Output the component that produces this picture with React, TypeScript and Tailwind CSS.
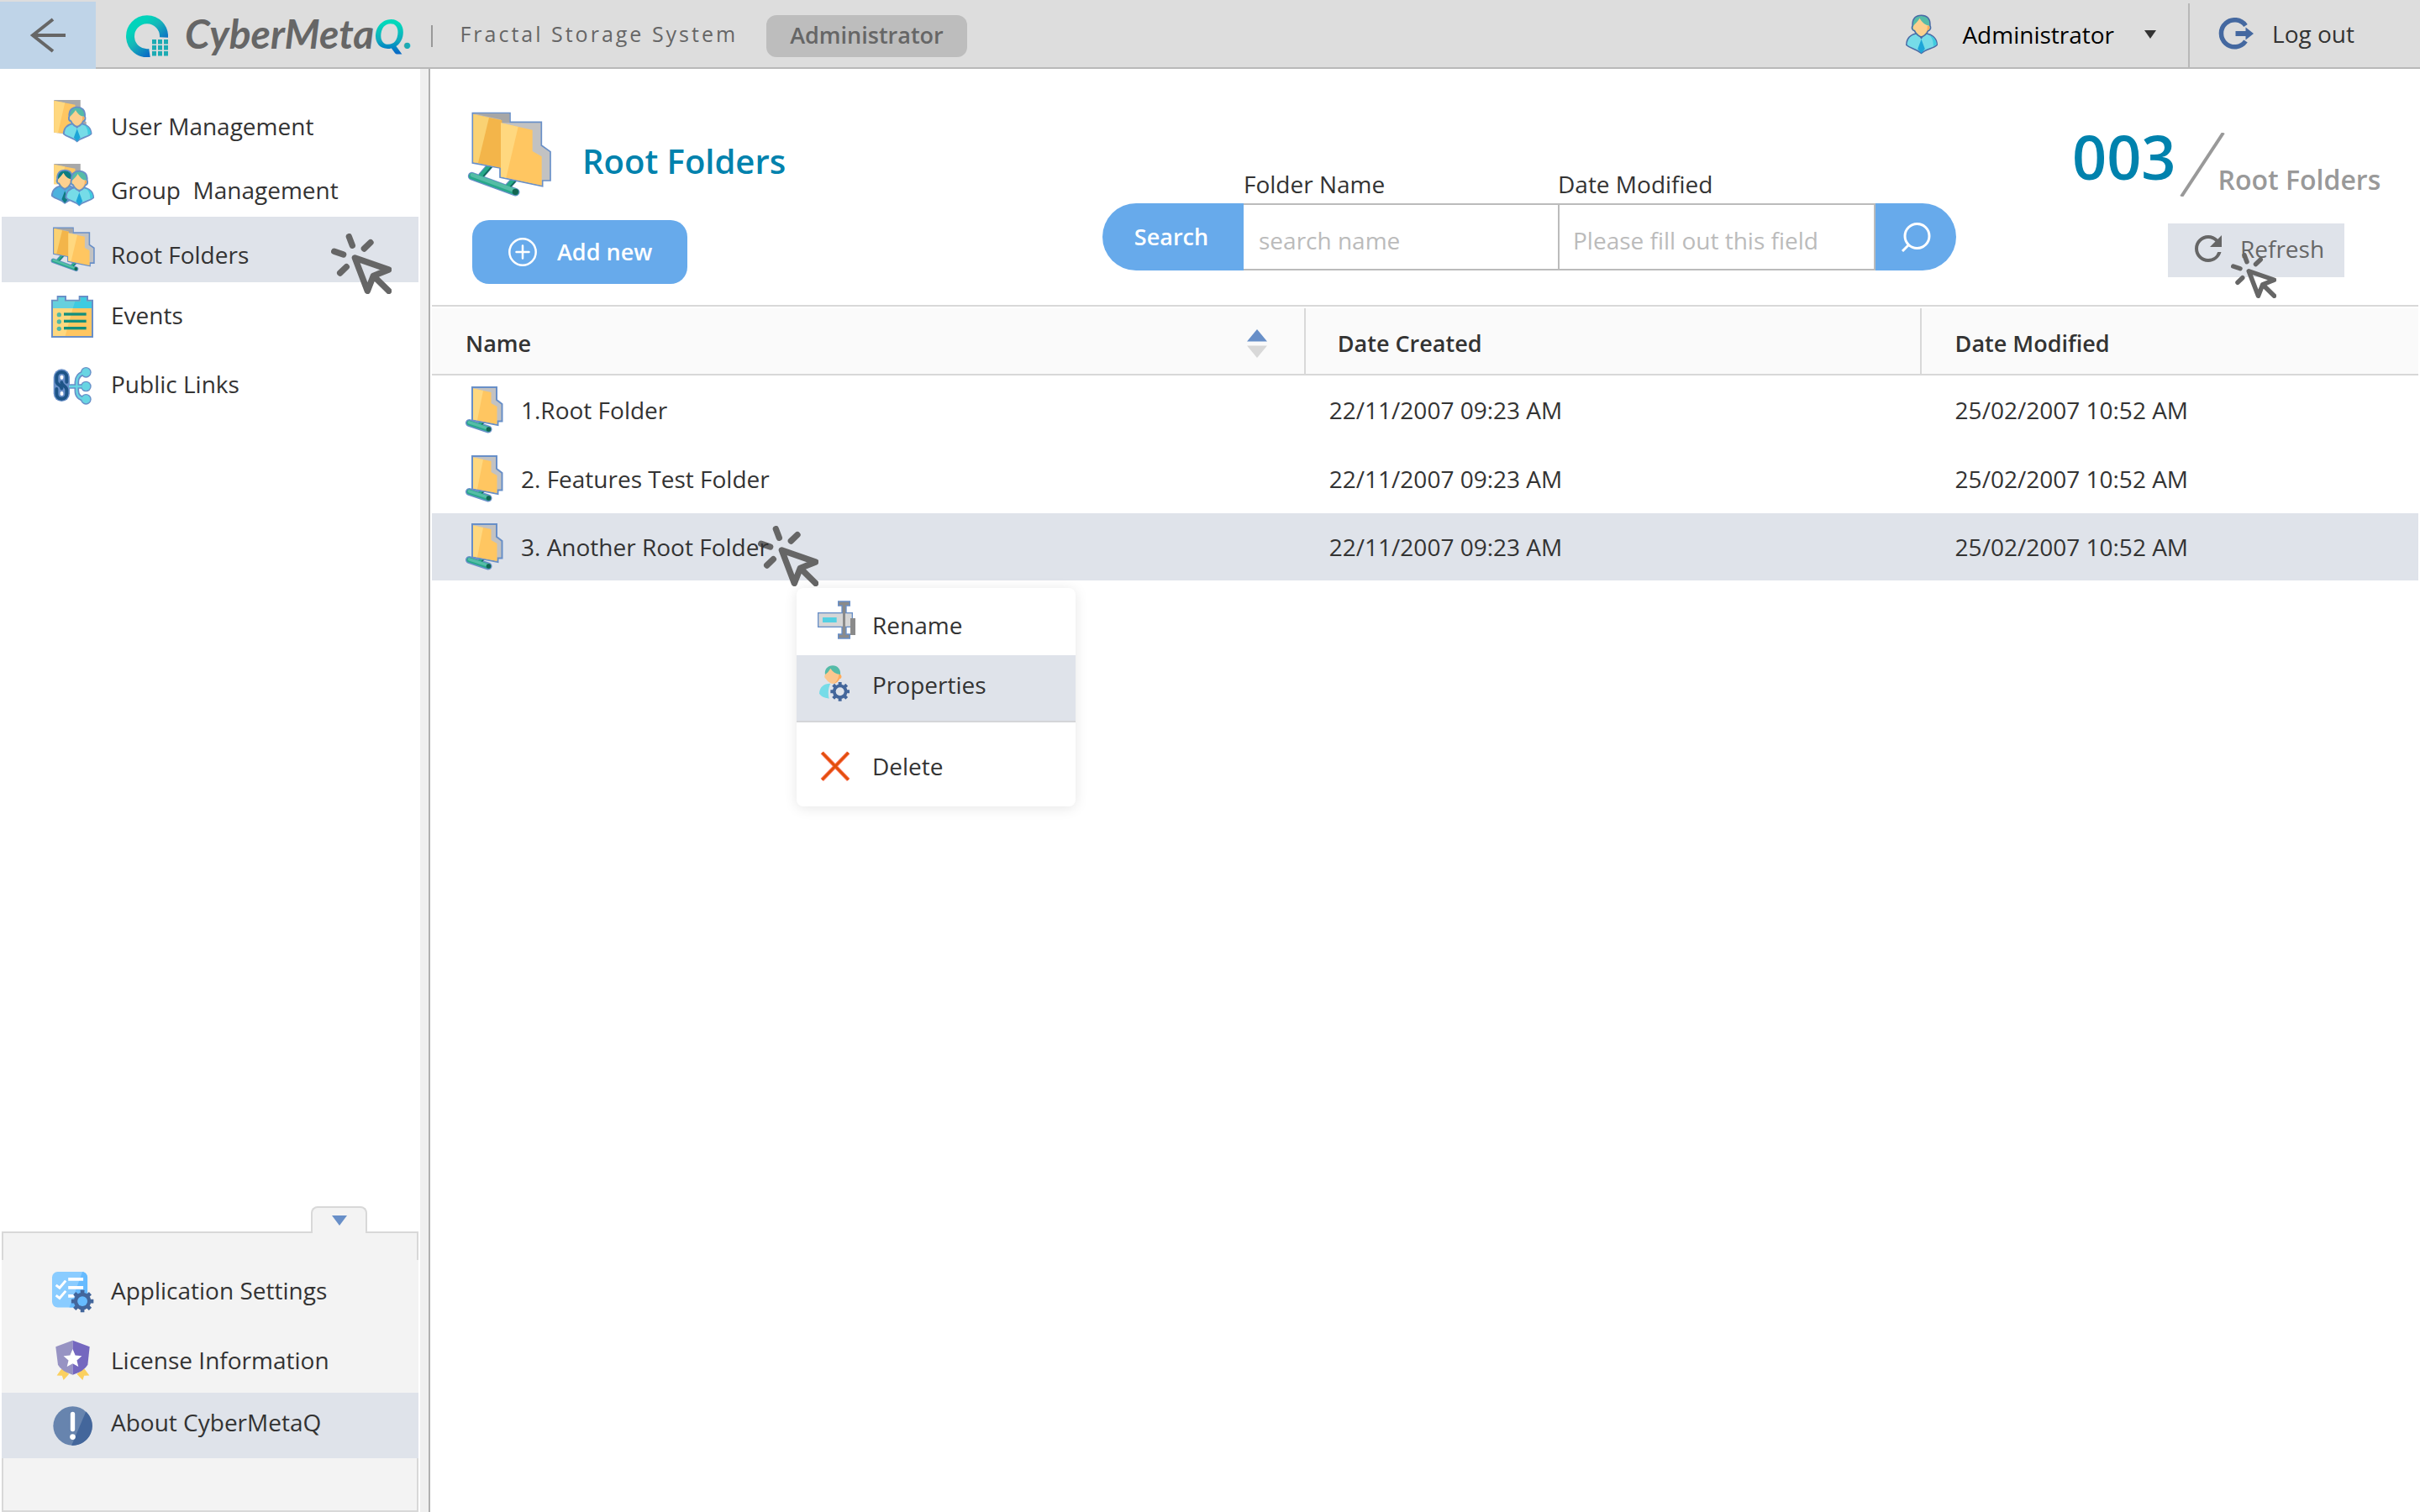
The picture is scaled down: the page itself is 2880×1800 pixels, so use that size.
import React from "react";
import type { ReactNode } from "react";
import { MdRefresh } from "react-icons/md";

const BLUE = "#688fc8";

function LogoMark() {
  return (
    <svg viewBox="0 0 50 50" className="size-[50px] shrink-0" aria-hidden="true">
      <defs>
        <linearGradient id="ring" gradientUnits="userSpaceOnUse" x1="8" y1="5" x2="42" y2="45">
          <stop offset="0.2" stopColor="#02d3bb" />
          <stop offset="0.45" stopColor="#17b5b8" />
          <stop offset="0.85" stopColor="#0a6cc6" />
        </linearGradient>
      </defs>
      <path d="M45 26.500A20 20 0 1 0 28 45" fill="none" stroke="url(#ring)" strokeWidth="10" />
      {[31, 38, 45].map((x) =>
        [29, 36, 43].map((y) => (
          <rect key={`${x}-${y}`} x={x} y={y} width="5" height="5.500" fill="#1cabb3" />
        )),
      )}
    </svg>
  );
}

function PersonShape({ back = false, line = 1.6 }: { back?: boolean; line?: number }) {
  const body = back ? "#4db2de" : "#76dce8";
  const side = back ? "#4db2de" : "#3fcbe0";
  const hair = back ? "#0d7d80" : "#55bba8";
  const tie = back ? "#0e7a80" : "#1da5d8";
  const edge = line > 1.6 ? BLUE : "#4a6ba6";
  return (
    <>
      <path
        d="M15 23.500C6 25 1.200 30 1 38C6 43 13 42.500 19.500 48.500C26 42.500 34 43 39 38C38.800 30 33 25 24 23.500Z"
        fill={body}
        stroke={edge}
        strokeWidth={line}
        strokeLinejoin="round"
      />
      <path d="M29 25.500C35 28 38.300 32 38.500 37.500L34.500 39.500C34.500 33 33 29 29 25.500Z" fill={side} />
      <path d="M19.500 31L24 43L19.500 48.500L15 43Z" fill={tie} />
      <path d="M14.500 24H24.500L19.500 31Z" fill={edge} />
      <path
        d="M8.700 14C8 5 13 1.200 19.500 1.200C26 1.200 31 5 30.300 14C32 17 30.500 20 28 20.500C26 24.500 22.500 27.500 19.500 28C16.500 27.500 13 24.500 11 20.500C8.500 20 7 17 8.700 14Z"
        fill={hair}
        stroke={edge}
        strokeWidth={line}
      />
      <path
        d="M17.500 5C15 9 12 12 9.800 14.200C8.500 17 9.500 19.300 11.800 19.500C13.500 23.500 17 26.500 19.500 27C22 26.500 25.500 23.500 27.200 19.500C29.500 19.300 30.500 17 29.200 14.200C23.500 13.500 20 9.500 17.500 5Z"
        fill="#fcd08f"
      />
      <path d="M27 14.500C27.500 19 25.500 24 21 26.600C24 25.500 26 22.500 27.200 19.500C29.500 19.300 30.500 17 29.200 14.200Z" fill="#ffab5c" />
    </>
  );
}

function UserIcon() {
  return (
    <svg viewBox="0 0 40 50" className="h-12 w-10 shrink-0" aria-hidden="true">
      <PersonShape />
    </svg>
  );
}

function UserManagementIcon() {
  return (
    <svg viewBox="178 84 158 160" className="h-[53px] w-[53px]" aria-hidden="true">
      <path d="M190 87H285V150L306 166V210H240L190 204Z" fill="#a8a8a8" />
      <path d="M190 90L266 104V212L190 203Z" fill="#ffc661" />
      <path d="M190 90L229 97L204 206L190 203Z" fill="#ffd87f" />
      <g transform="translate(222 110) scale(2.6)">
        <PersonShape line={2.2} />
      </g>
    </svg>
  );
}

function GroupManagementIcon() {
  return (
    <svg viewBox="178 84 158 160" className="h-[53px] w-[53px]" aria-hidden="true">
      <path d="M190 87H285V130H190Z" fill="#a8a8a8" />
      <path d="M190 90L266 104V160H190Z" fill="#ffc661" />
      <path d="M190 90L229 97L214 160H190Z" fill="#ffd87f" />
      <g transform="translate(180 107) scale(2.5)">
        <PersonShape back line={2.2} />
      </g>
      <g transform="translate(230 110) scale(2.6)">
        <PersonShape line={2.2} />
      </g>
    </svg>
  );
}

function RootFoldersIcon({ large = false }: { large?: boolean }) {
  const w = large ? 5 : 9;
  return (
    <svg
      viewBox="166 94 306 312"
      className={large ? "h-[104px] w-[102px] shrink-0" : "h-[54px] w-[53px]"}
      aria-hidden="true"
    >
      <g strokeLinecap="round">
        <path d="M250 290L220 324M336 340L316 362" stroke={BLUE} strokeWidth={18 + w} />
        <path d="M186 327L342 384" stroke={BLUE} strokeWidth={24 + w} />
        <path d="M250 290L220 324M336 340L316 362" stroke="#27a98b" strokeWidth="17" />
        <path d="M256 294L228 326M342 344L324 364" stroke="#126a58" strokeWidth="5" />
        <path d="M186 327L342 384" stroke="#27a98b" strokeWidth="22" />
        <path d="M187 323L340 379" stroke="#55bda6" strokeWidth="14" />
      </g>
      <circle cx="341" cy="383" r="11" fill="#126652" />
      <path
        d="M188 102H322V134H434V217L466 240V343H438V363L286 331V298L188 280Z"
        fill="#c2c2c2"
        stroke={BLUE}
        strokeWidth={w}
      />
      <path d="M191 104H320V137H289V125Z" fill="#a6a6a6" />
      <path d="M191 106L293 127V298L191 277Z" fill="#f3b54a" />
      <path d="M191 106L247 118L208 280L191 277Z" fill="#fad273" />
      <path d="M289 137L402 162V238L435 257V360L289 329Z" fill="#ffc661" />
      <path d="M289 137L351 151L308 333L289 329Z" fill="#ffd87f" />
    </svg>
  );
}

function EventsIcon() {
  return (
    <svg viewBox="180 786 156 156" className="size-[52px]" aria-hidden="true">
      <path
        d="M186 806H206V792H234V806H284V792H312V806H330V936H186Z"
        fill="#ffc661"
        stroke={BLUE}
        strokeWidth="6"
      />
      <path d="M189 809H209V795H231V809H287V795H309V809H327V834H189Z" fill="#3fcbe0" />
      <path d="M189 809H209V795H231V809H268L260 834H189Z" fill="#66d0de" />
      <path d="M189 834H260L233 933H189Z" fill="#ffd87f" />
      {[857, 882, 907].map((y) => (
        <g key={y}>
          <circle cx="211" cy={y} r="8" fill="#50b8a5" />
          <path d={`M228 ${y - 2}H308`} stroke="#138f7c" strokeWidth="10" />
        </g>
      ))}
    </svg>
  );
}

function PublicLinksIcon() {
  return (
    <svg viewBox="182 1032 148 150" className="size-[50px]" fill="none" aria-hidden="true">
      <rect x="189" y="1048" width="58" height="116" rx="29" fill={BLUE} />
      <g strokeLinecap="round">
        <path d="M250 1110H290M304 1060C280 1064 272 1080 272 1095V1125C272 1142 280 1154 304 1156" stroke={BLUE} strokeWidth="17" />
      </g>
      {[1060, 1110, 1156].map((y) => (
        <circle key={y} cx="305" cy={y} r="19" fill={BLUE} />
      ))}
      <path d="M244 1110H290M304 1060C280 1064 272 1080 272 1095V1125C272 1142 280 1154 304 1156" stroke="#68d5e3" strokeWidth="7" />
      {[1060, 1110, 1156].map((y) => (
        <circle key={y} cx="305" cy={y} r="15" fill="#68d5e3" />
      ))}
      <path
        d="M236 1094V1077C236 1053 200 1053 200 1077V1092C200 1106 218 1104 218 1117"
        stroke="#1d5487"
        strokeWidth="12"
        strokeLinecap="round"
      />
      <path
        d="M200 1119V1136C200 1160 236 1160 236 1136V1122C236 1108 218 1108 218 1096"
        stroke="#1d5487"
        strokeWidth="12"
        strokeLinecap="round"
      />
      <rect x="213" y="1070" width="11" height="15" rx="5" fill="#fff" />
      <rect x="213" y="1128" width="11" height="15" rx="5" fill="#fff" />
    </svg>
  );
}

function Gear({ cx, cy, r, hole, holeFill }: { cx: number; cy: number; r: number; hole: number; holeFill: string }) {
  return (
    <g transform={`translate(${cx} ${cy}) scale(${r / 40})`}>
      {[0, 45, 90, 135].map((a) => (
        <rect key={a} x="-7" y="-40" width="14" height="80" rx="1" fill="#43669b" transform={`rotate(${a})`} />
      ))}
      <circle r="31" fill="#43669b" />
      <circle r={(hole * 40) / r} fill={holeFill} />
    </g>
  );
}

function AppSettingsIcon() {
  return (
    <svg viewBox="62 36 154 154" className="size-[51px]" fill="none" aria-hidden="true">
      <rect x="65" y="39" width="127" height="128" rx="20" fill="#8accff" />
      <path d="M174 39C186 41 192 50 192 59V147C192 158 184 167 172 167H127Z" fill="#66bbff" />
      <path d="M79 87L92 97L114 71M79 124L92 134L114 108" stroke="#fff" strokeWidth="9" />
      <path d="M123 66H177M123 96H177M123 126H145" stroke="#fff" strokeWidth="11" />
      <Gear cx={174} cy={145} r={40} hole={18} holeFill="#66bbff" />
    </svg>
  );
}

function LicenseIcon() {
  return (
    <svg viewBox="62 282 154 154" className="size-[51px]" aria-hidden="true">
      <path d="M100 388L126 408L106 430L101 414L82 413ZM180 388L154 408L175 430L180 414L199 413Z" fill="#fbd05f" />
      <path d="M139 287L78 310L86 375Q98 398 139 411Z" fill="#9793c3" />
      <path d="M139 287L200 310L193 375Q180 398 139 411Z" fill="#7467bf" />
      <path d="M139 318L148.500 341L172 343L154 359L159.500 382L139 370L118.500 382L124 359L106 343L129.500 341Z" fill="#fff" />
    </svg>
  );
}

function AboutIcon() {
  return (
    <svg viewBox="62 512 152 152" className="size-[51px]" aria-hidden="true">
      <circle cx="138" cy="588" r="69" fill="#6784ae" />
      <path d="M185 537A69 69 0 0 1 134 657Z" fill="#43669b" />
      <path d="M138 546V600" stroke="#fff" strokeWidth="16" strokeLinecap="round" />
      <circle cx="138" cy="627" r="10" fill="#fff" />
    </svg>
  );
}

function RowFolderIcon() {
  return (
    <svg viewBox="0 0 46 56" className="h-14 w-[46px] shrink-0" fill="none" aria-hidden="true">
      <path d="M22 39L16 46" stroke={BLUE} strokeWidth="7" />
      <path d="M4.500 43.500L27 51" stroke={BLUE} strokeWidth="9" strokeLinecap="round" />
      <path d="M22 39L16 46" stroke="#27a98b" strokeWidth="4" />
      <path d="M23 41L19 46" stroke="#126a58" strokeWidth="1.500" />
      <path d="M4.500 43.500L27 51" stroke="#27a98b" strokeWidth="6" strokeLinecap="round" />
      <path d="M4.500 42.800L26 49.800" stroke="#55bda6" strokeWidth="3.500" strokeLinecap="round" />
      <circle cx="27.500" cy="51" r="2.800" fill="#126652" />
      <path d="M8 1H37V16L43.500 21V41.500H38.500V46L8 40Z" fill="#c2c2c2" stroke={BLUE} strokeWidth="2" />
      <path d="M9 2.500L30.500 7V20L37.500 24V45L9 39.500Z" fill="#ffc661" />
      <path d="M9 2.500L21 5L14 40.500L9 39.500Z" fill="#ffd87f" />
    </svg>
  );
}

function RenameIcon() {
  return (
    <svg viewBox="210 342 144 144" className="size-12" aria-hidden="true">
      <rect x="221" y="389" width="122" height="50" fill="#d6d6d6" stroke={BLUE} strokeWidth="4" />
      <rect x="237" y="405" width="50" height="18" fill="#54d0e2" />
      <path d="M293 348H334V363H321V465H334V480H293V465H306V363H293Z" fill="#8a8a8a" stroke={BLUE} strokeWidth="4" />
      <rect x="303" y="391" width="21" height="46" fill="#d6d6d6" />
      <rect x="309" y="352" width="9" height="124" fill="#8a8a8a" />
      <rect x="336" y="408" width="18" height="60" fill="#8a8a8a" />
    </svg>
  );
}

function PropertiesIcon() {
  return (
    <svg viewBox="210 574 144 144" className="size-12" aria-hidden="true">
      <path d="M225 678C226 655 240 642 265 642C256 660 256 678 260 696C248 693 232 690 225 678Z" fill="#76dce8" />
      <path d="M246 612C242 590 256 578 273 578C290 578 303 592 300 612Z" fill="#55bba8" />
      <path d="M265 588C260 598 252 606 246 610C242 616 243 622 249 626C255 636 266 643 273 643C281 643 292 636 297 626C306 624 306 614 300 610C284 608 272 600 265 588Z" fill="#fcc78f" />
      <path d="M295 611C294 624 288 636 277 643C286 641 292 636 297 626C306 624 306 614 300 610Z" fill="#ffab5c" />
      <Gear cx={299} cy={671} r={34} hole={15} holeFill="#dfe3ea" />
    </svg>
  );
}

function DeleteIcon() {
  return (
    <svg viewBox="210 864 144 144" className="size-12" aria-hidden="true">
      <path d="M235 888L329 985M329 888L235 985" stroke="#ff7058" strokeWidth="14" />
      <path d="M235 888L329 985M329 888L235 985" stroke="#e0500a" strokeWidth="8" />
    </svg>
  );
}

function ClickCursor({ className }: { className: string }) {
  return (
    <svg
      viewBox="1182 564 216 216"
      className={`pointer-events-none absolute ${className}`}
      fill="none"
      stroke="#666"
      strokeWidth="22"
      strokeLinecap="round"
      strokeLinejoin="round"
      aria-hidden="true"
    >
      <path d="M1246 575L1258 607M1323 596L1300 618M1193 628L1226 639M1237 683L1214 705" />
      <path d="M1267 651L1388 693L1333 715L1312 769ZM1337 719L1388 769" />
    </svg>
  );
}

function LogOutIcon() {
  return (
    <svg viewBox="0 0 42 38" className="h-[38px] w-[42px]" aria-hidden="true">
      <path d="M32.500 9.500A16 16 0 1 0 32.500 28" fill="none" stroke="#4468a0" strokeWidth="5.500" />
      <path d="M20.500 16H32.500V11.500L42 19L32.500 26.500V22H20.500Z" fill="#4468a0" />
    </svg>
  );
}

type NavItem = { label: string; icon: ReactNode; row: string; text?: string };

const navItems: NavItem[] = [
  { label: "User Management", icon: <UserManagementIcon />, row: "h-[76px]", text: "pt-3" },
  { label: "Group  Management", icon: <GroupManagementIcon />, row: "h-[76px]", text: "pt-3" },
  { label: "Root Folders", icon: <RootFoldersIcon />, row: "h-[78px] bg-[#dfe3ea]", text: "pt-3" },
  { label: "Events", icon: <EventsIcon />, row: "h-[82px]", text: "pb-1" },
  { label: "Public Links", icon: <PublicLinksIcon />, row: "h-[82px]", text: "pb-1" },
];

const settingsItems: NavItem[] = [
  { label: "Application Settings", icon: <AppSettingsIcon />, row: "h-20 pb-1", text: "pb-1" },
  { label: "License Information", icon: <LicenseIcon />, row: "h-[78px]" },
  { label: "About CyberMetaQ", icon: <AboutIcon />, row: "h-[78px] bg-[#dfe3ea]", text: "pb-2" },
];

function NavLink({ item }: { item: NavItem }) {
  return (
    <a href="#" className={`flex items-center gap-[18px] pl-14 ${item.row}`}>
      <span className="flex w-14 shrink-0 justify-center">{item.icon}</span>
      <span className={`whitespace-pre ${item.text ?? ""}`}>{item.label}</span>
    </a>
  );
}

function Header() {
  return (
    <header className="flex h-[82px] items-stretch border-b-2 border-[#b8b8b8] bg-[#ddd]">
      <button type="button" aria-label="Back" className="mt-0.5 -mb-0.5 flex w-[114px] items-center justify-center bg-[#bfd4e8]">
        <svg viewBox="0 0 44 42" className="h-[42px] w-11" fill="none" stroke="#666" strokeWidth="4" aria-hidden="true">
          <path d="M43 21H4M28 2L4 21L28 40" />
        </svg>
      </button>
      <div className="ml-9 flex items-center pt-1.5">
        <LogoMark />
        <span className="ml-5 pb-1.5 font-['Lato',sans-serif] text-5xl leading-[60px] font-bold text-[#666] italic">
          CyberMeta
          <span className="bg-linear-to-b from-[#02d8bb] from-30% via-[#12a9bd] via-65% to-[#0a6cc6] to-90% bg-clip-text text-transparent">Q</span>
          <span className="text-[#1cabb3]">.</span>
        </span>
        <span className="ml-[22px] h-[26px] w-0.5 bg-[#999]" />
        <span className="ml-8 pb-1.5 text-[25px] tracking-[3px] text-[#666]">Fractal Storage System</span>
        <span className="ml-[34px] flex h-[50px] items-center rounded-xl bg-[#bdbdbd] px-7 pb-0.5 text-[27px] font-semibold text-[#666]">
          Administrator
        </span>
      </div>
      <div className="ml-auto flex items-center">
        <button type="button" className="flex items-center pt-0.5 pr-[38px] text-black">
          <UserIcon />
          <span className="ml-7">Administrator</span>
          <svg viewBox="0 0 14 10" className="ml-9 h-2.5 w-3.5" fill="#333" aria-hidden="true">
            <path d="M0 0H14L7 10Z" />
          </svg>
        </button>
        <span className="mt-1 w-0.5 self-stretch bg-[#b8b8b8]" />
        <button type="button" className="flex items-center gap-[22px] pr-[78px] pl-[34px]">
          <LogOutIcon />
          Log out
        </button>
      </div>
    </header>
  );
}

function Sidebar() {
  return (
    <aside className="flex w-[512px] shrink-0 border-r-2 border-[#b0b0b0]">
      <div className="flex flex-1 flex-col px-0.5">
        <nav className="relative pt-6">
          {navItems.map((item) => (
            <NavLink key={item.label} item={item} />
          ))}
          <ClickCursor className="top-[196px] right-[32px] size-[72px]" />
        </nav>
        <div className="mt-auto">
          <div className="flex justify-end pr-[61px]">
            <button
              type="button"
              aria-label="Collapse settings"
              className="relative z-10 -mb-0.5 flex h-8 w-[67px] items-center justify-center rounded-t-lg border-2 border-b-0 border-[#d8d8d8] bg-[#f3f3f3]"
            >
              <svg viewBox="0 0 18 12" className="h-3 w-[18px]" fill={BLUE} aria-hidden="true">
                <path d="M0 0H18L9 12Z" />
              </svg>
            </button>
          </div>
          <nav className="bg-[#f3f3f3]">
            <div className="h-[34px] border-x-2 border-t-2 border-[#d8d8d8]" />
            {settingsItems.map((item) => (
              <NavLink key={item.label} item={item} />
            ))}
            <div className="h-16 border-x-2 border-b-2 border-[#d8d8d8]" />
          </nav>
        </div>
      </div>
      <div className="w-2.5 bg-[#efefef]" />
    </aside>
  );
}

function SearchBar() {
  return (
    <form className="mr-[138px] ml-auto flex items-end self-end pb-[41px]" onSubmit={(e) => e.preventDefault()}>
      <button type="submit" className="h-20 w-[168px] rounded-l-full bg-[#67aaeb] pr-1 text-[27px] font-semibold text-white">
        Search
      </button>
      <div className="flex w-[374px] flex-col gap-1">
        <label htmlFor="folder-name">Folder Name</label>
        <input
          id="folder-name"
          placeholder="search name"
          className="h-20 border-y-2 border-[#bbb] px-[18px] pt-2 outline-none placeholder:text-[#bbb]"
        />
      </div>
      <div className="flex w-[378px] flex-col gap-1">
        <label htmlFor="date-modified">Date Modified</label>
        <input
          id="date-modified"
          placeholder="Please fill out this field"
          className="h-20 border-2 border-[#bbb] px-4 pt-2 outline-none placeholder:text-[#bbb]"
        />
      </div>
      <button type="submit" aria-label="Run search" className="flex h-20 w-24 items-center justify-center rounded-r-full bg-[#67aaeb]">
        <svg viewBox="0 0 36 36" className="size-9" fill="none" stroke="#fff" strokeWidth="3" aria-hidden="true">
          <circle cx="19.500" cy="17" r="14.500" />
          <path d="M9 28L2 35" />
        </svg>
      </button>
    </form>
  );
}

function Toolbar() {
  return (
    <section className="flex h-[281px] pr-11 pl-[41px]">
      <div className="flex flex-col items-start pt-[50px]">
        <div className="flex items-center gap-9">
          <RootFoldersIcon large />
          <h1 className="pt-4 text-[40px] leading-[54px] font-semibold text-[#0082ad]">Root Folders</h1>
        </div>
        <button
          type="button"
          className="mt-[26px] ml-[7px] flex h-[76px] w-64 items-center rounded-[20px] bg-[#67aaeb] pl-[43px] text-[27px] font-semibold text-white"
        >
          <svg viewBox="0 0 34 34" className="mr-6 size-[34px]" fill="none" stroke="#fff" strokeWidth="2.500" strokeLinecap="round" aria-hidden="true">
            <circle cx="17" cy="17" r="15.700" />
            <path d="M17 9.500V24.500M9.500 17H24.500" />
          </svg>
          Add new
        </button>
      </div>
      <SearchBar />
      <div className="flex w-[368px] flex-col items-end pt-[68px]">
        <div className="flex w-full items-end">
          <span className="mb-3 text-7xl leading-none font-semibold text-[#0082ad]">003</span>
          <svg viewBox="0 0 54 76" className="ml-1 h-[76px] w-[54px]" stroke="#999" strokeWidth="4" aria-hidden="true">
            <path d="M2 76L52 0" />
          </svg>
          <span className="mb-1 -ml-2 text-[32px] leading-8 font-semibold text-[#999]">Root Folders</span>
        </div>
        <div className="relative mt-8 mr-11">
          <button type="button" className="flex h-16 w-[210px] items-center gap-3.5 bg-[#dfe3ea] pb-1 pl-6 text-[#666]">
            <MdRefresh className="size-12" aria-hidden="true" />
            Refresh
          </button>
          <ClickCursor className="top-[35px] left-[75px] size-[54px]" />
        </div>
      </div>
    </section>
  );
}

function ContextMenu() {
  return (
    <div
      role="menu"
      className="absolute top-[89px] left-[434px] z-10 flex w-[332px] flex-col overflow-hidden rounded-lg bg-white shadow-[0_2px_16px_rgba(0,0,0,0.1)]"
    >
      <button type="button" role="menuitem" className="flex h-20 items-center gap-5 pb-1 pl-[22px]">
        <RenameIcon />
        <span className="pt-3">Rename</span>
      </button>
      <button
        type="button"
        role="menuitem"
        className="flex h-20 items-center gap-5 border-b-2 border-[#d4d5d8] bg-[#dfe3ea] pb-2 pl-[22px]"
      >
        <PropertiesIcon />
        Properties
      </button>
      <button type="button" role="menuitem" className="flex h-[100px] items-center gap-5 pt-1 pl-[22px]">
        <DeleteIcon />
        Delete
      </button>
    </div>
  );
}

const folders = ["1.Root Folder", "2. Features Test Folder", "3. Another Root Folder"];

function FolderTable() {
  const head = "h-20 border-b-2 border-[#d8d8d8] bg-[#fafafa] pt-1.5 text-left text-[27px] font-semibold";
  return (
    <div className="border-t-2 border-[#d8d8d8] pt-0.5">
      <table className="w-full table-fixed border-separate border-spacing-0">
        <colgroup>
          <col className="w-[43.9%]" />
          <col className="w-[31%]" />
          <col />
        </colgroup>
        <thead>
          <tr>
            <th scope="col" className={head}>
              <div className="flex items-center justify-between pr-11 pl-10">
                Name
                <button type="button" aria-label="Sort by name">
                  <svg viewBox="0 0 24 34" className="h-[34px] w-6" aria-hidden="true">
                    <path d="M0 14.500L12 0L24 14.500Z" fill={BLUE} />
                    <path d="M0 19.500H24L12 34Z" fill="#d8d8d8" />
                  </svg>
                </button>
              </div>
            </th>
            <th scope="col" className={`border-l-2 pl-[38px] ${head}`}>Date Created</th>
            <th scope="col" className={`border-l-2 pl-10 ${head}`}>Date Modified</th>
          </tr>
        </thead>
        <tbody>
          {folders.map((name, i) => {
            const active = i === 2;
            const cell = active ? "h-20 bg-[#dfe3ea]" : "h-[82px]";
            return (
              <tr key={name}>
                <td className={`relative pl-10 ${cell}`}>
                  {active && <ClickCursor className="top-[15px] left-[388px] size-[72px]" />}
                  <div className="relative flex items-center gap-5">
                    <RowFolderIcon />
                    {name}
                  </div>
                  {active && <ContextMenu />}
                </td>
                <td className={`pl-[30px] ${cell}`}>22/11/2007 09:23 AM</td>
                <td className={`pl-[42px] ${cell}`}>25/02/2007 10:52 AM</td>
              </tr>
            );
          })}
        </tbody>
      </table>
    </div>
  );
}

export default function App() {
  return (
    <div className="flex min-h-screen flex-col bg-white font-['Open_Sans',sans-serif] text-[28px] leading-[38px] text-[#333]">
      <Header />
      <div className="flex flex-1">
        <Sidebar />
        <main className="min-w-0 flex-1 px-0.5">
          <Toolbar />
          <FolderTable />
        </main>
      </div>
    </div>
  );
}
